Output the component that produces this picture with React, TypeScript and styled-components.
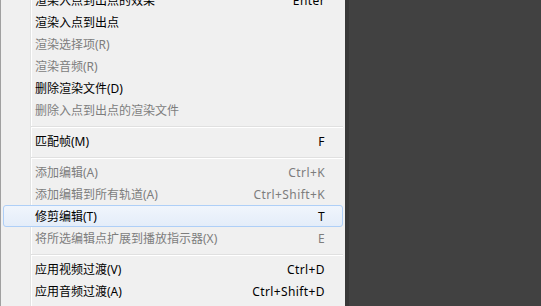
import React from 'react';
import styled, { createGlobalStyle } from 'styled-components';

interface IMenuItem {
  label: string;
  shortcut?: string;
  disabled?: boolean;
  active?: boolean;
  separator?: boolean;
}

const items: IMenuItem[] = [
  { label: '渲染入点到出点的效果', shortcut: 'Enter' },
  { label: '渲染入点到出点' },
  { label: '渲染选择项(R)', disabled: true },
  { label: '渲染音频(R)', disabled: true },
  { label: '删除渲染文件(D)' },
  { label: '删除入点到出点的渲染文件', disabled: true },
  { label: '', separator: true },
  { label: '匹配帧(M)', shortcut: 'F' },
  { label: '', separator: true },
  { label: '添加编辑(A)', shortcut: 'Ctrl+K', disabled: true },
  { label: '添加编辑到所有轨道(A)', shortcut: 'Ctrl+Shift+K', disabled: true },
  { label: '修剪编辑(T)', shortcut: 'T', active: true },
  { label: '将所选编辑点扩展到播放指示器(X)', shortcut: 'E', disabled: true },
  { label: '', separator: true },
  { label: '应用视频过渡(V)', shortcut: 'Ctrl+D' },
  { label: '应用音频过渡(A)', shortcut: 'Ctrl+Shift+D' },
];

export default function App() {
  return (
    <>
      <GlobalStyle />
      <Page>
        <Menu>
          {items.map((item, index) =>
            item.separator ? (
              <Separator key={index} />
            ) : (
              <Item key={index} isActive={!!item.active} isDisabled={!!item.disabled}>
                <Label>{item.label}</Label>
                {item.shortcut && <Shortcut>{item.shortcut}</Shortcut>}
              </Item>
            ),
          )}
        </Menu>
        <Desktop />
      </Page>
    </>
  );
}

const GlobalStyle = createGlobalStyle`
  html, body {
    margin: 0;
    padding: 0;
    width: 541px;
    height: 306px;
    overflow: hidden;
    background: #414141;
  }
`;

const Page = styled.div`
  display: flex;
  height: 306px;
  overflow: hidden;
`;

const Menu = styled.div`
  box-sizing: border-box;
  width: 345px;
  flex-shrink: 0;
  margin-top: -11px;
  padding-bottom: 8px;
  border-left: 1px solid #a0a0a0;
  background:
    linear-gradient(
      to right,
      transparent 29px,
      #e2e3e3 29px,
      #e2e3e3 30px,
      #ffffff 30px,
      #ffffff 31px,
      transparent 31px
    ),
    #f0f0f0;
  font-family: 'Noto Sans', 'Noto Sans CJK SC', sans-serif;
  font-size: 12px;
`;

const Item = styled.div<{ isActive: boolean; isDisabled: boolean }>`
  box-sizing: border-box;
  display: flex;
  align-items: center;
  justify-content: space-between;
  height: 22px;
  margin: 0 2px;
  padding: 2px 17px 0 31px;
  border: 1px solid ${({ isActive }) => (isActive ? '#aecff7' : 'transparent')};
  border-radius: 3px;
  background: ${({ isActive }) =>
    isActive ? 'linear-gradient(to bottom, #f0f5fc, #e4edf9)' : 'transparent'};
  color: ${({ isDisabled }) => (isDisabled ? '#7d7d7d' : '#000000')};
  white-space: nowrap;
`;

const Label = styled.span`
  line-height: 18px;
`;

const Shortcut = styled.span`
  line-height: 18px;
  letter-spacing: 0.4px;
`;

const Separator = styled.div`
  height: 9px;
  margin: 0 2px 0 30px;
  background: linear-gradient(
    to bottom,
    transparent 5px,
    #e0e0e0 5px,
    #e0e0e0 6px,
    #ffffff 6px,
    #ffffff 7px,
    transparent 7px
  );
`;

const Desktop = styled.div`
  flex: 1;
  border-left: 4px solid #383838;
  background: #414141;
`;
